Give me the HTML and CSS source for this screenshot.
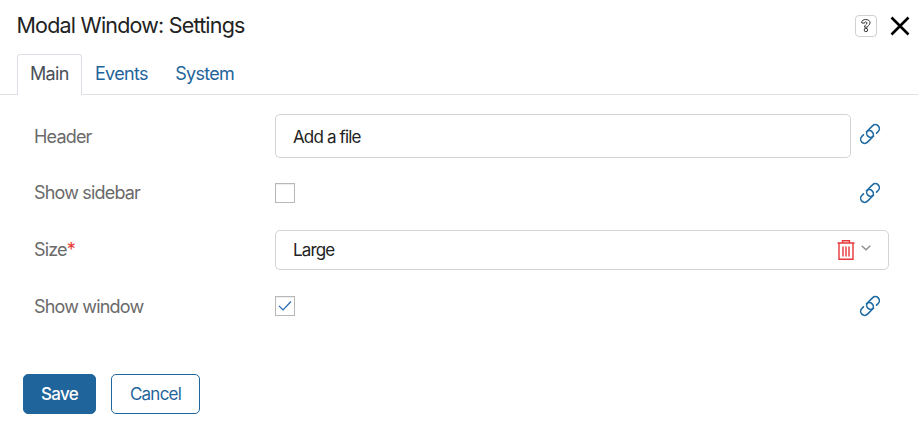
FILE: index.html
```html
<!DOCTYPE html>
<html lang="en">
<head>
<meta charset="utf-8">
<title>Modal Window: Settings</title>
<link rel="stylesheet" href="styles.css">
</head>
<body>
<svg class="sprite" aria-hidden="true">
  <symbol id="link" viewBox="0 0 22 22">
    <g fill="none" stroke="currentColor" stroke-width="1.6" stroke-linecap="round">
      <path transform="translate(14 8) rotate(-45)" d="M1 4H3.300A4 4 0 0 0 3.300 -4H-3.300A4 4 0 0 0 -3.300 4"/>
      <path transform="translate(8 14) rotate(135)" d="M1 4H3.300A4 4 0 0 0 3.300 -4H-3.300A4 4 0 0 0 -3.300 4"/>
    </g>
  </symbol>
</svg>
<main class="modal">
  <header class="head">
    <h1 class="title">Modal Window: Settings</h1>
    <button class="help" aria-label="Help"><svg width="12" height="16" viewBox="0 0 12 16"><path d="M1.700 4.900C1.700 2.400 3.500 1.500 5.700 1.500C8.300 1.500 10 2.700 10 4.800C10 7.300 7.400 7.500 7.400 9.200H4.500C4.500 6.800 6.900 6.700 6.900 5C6.900 3.400 4.400 3.500 4.400 5.200Z"/><circle cx="5.900" cy="12" r="1.700"/></svg></button>
    <button class="close" aria-label="Close"><svg width="20" height="20" viewBox="0 0 20 20"><path d="M1.500 1.500L18.500 18.500M18.500 1.500L1.500 18.500"/></svg></button>
  </header>
  <nav class="tabs">
    <a class="tab active">Main</a>
    <a class="tab">Events</a>
    <a class="tab">System</a>
  </nav>
  <form class="form">
    <div class="row tall">
      <span class="label">Header</span>
      <div class="field input">Add a file</div>
      <svg class="link"><use href="#link"/></svg>
    </div>
    <div class="row mid">
      <span class="label">Show sidebar</span>
      <span class="check"></span>
      <svg class="link"><use href="#link"/></svg>
    </div>
    <div class="row size">
      <span class="label">Size<span class="req">*</span></span>
      <div class="field select"><span class="value">Large</span>
        <svg class="trash" width="20" height="22" viewBox="0 0 20 22"><path d="M1.500 4H18.500M6.500 3.500V1.800H13.500V3.500M3 4.500V20.200H17V4.500M7 7.500V17.500M10 7.500V17.500M13 7.500V17.500"/></svg>
        <svg class="chevron" width="12" height="8" viewBox="0 0 12 8"><path d="M1.700 1.700L6 5.700L10.300 1.700"/></svg>
      </div>
    </div>
    <div class="row last">
      <span class="label">Show window</span>
      <span class="check"><svg width="14" height="12" viewBox="0 0 14 12"><path d="M1 5.800L5 9.800L13 1.500"/></svg></span>
      <svg class="link"><use href="#link"/></svg>
    </div>
  </form>
  <footer class="actions">
    <button class="btn save">Save</button>
    <button class="btn cancel">Cancel</button>
  </footer>
</main>
</body>
</html>
```
FILE: styles.css
```css
* { box-sizing: border-box; }
body { margin: 0; background: #fff; font-family: Inter, "Liberation Sans", sans-serif; color: #222; }
button { font: inherit; padding: 0; background: none; border: 0; }
svg { display: block; fill: none; }
.sprite { width: 0; height: 0; position: absolute; }
.modal { height: 432px; overflow: hidden; }
.head { height: 54px; padding: 0 8px 2px 16.500px; display: flex; align-items: center; }
.title { margin: 0; flex: 1; padding-bottom: 2px; font-size: 21.500px; font-weight: 400; letter-spacing: -0.800px; line-height: 28px; white-space: nowrap; }
.help { width: 22px; height: 22px; border: 1px solid #d0d0d0; border-radius: 4px; display: grid; place-items: center; margin-right: 13px; }
.help path, .help circle { stroke: #333; stroke-width: 1; }
.close path { stroke: #000; stroke-width: 2.600; }
.tabs { height: 41px; padding-left: 17px; display: flex; border-bottom: 1px solid #dee0e5; }
.tab { height: 41px; padding: 0 13px 2px; border: 1px solid transparent; border-bottom: 0; display: flex; align-items: center; font-size: 18px; letter-spacing: -0.700px; color: #1f659b; line-height: 24px; }
.tab.active { width: 65px; background: #fff; border-color: #dedfe6; border-radius: 3px 3px 0 0; color: #4a4f57; padding: 0 12px 2px; }
.tab:nth-child(2) { margin-left: -1px; }
.tab:nth-child(3) { margin-left: -0.500px; }
.form { padding: 17px 29px 0 34px; }
.row { display: grid; grid-template-columns: 241px 576px 30px; align-items: center; }
.row .link { width: 22px; height: 22px; color: #1f6ba3; margin-left: 8px; }
.tall { height: 48px; }
.tall .link { margin-bottom: 4px; }
.tall .label, .last .label { padding-top: 2px; }
.mid { height: 66px; }
.size { height: 48px; }
.last { height: 64px; }
.label { font-size: 18px; letter-spacing: -0.820px; color: #6a6a6a; line-height: 24px; }
.req { color: #e53935; }
.field { border: 1px solid #d4d4d4; border-radius: 5px; font-size: 17px; letter-spacing: -0.860px; padding: 0 17px; display: flex; align-items: center; color: #222; }
.input { height: 44px; padding-top: 2px; }
.select { height: 40px; width: 614px; padding-right: 16px; }
.value { flex: 1; }
.trash { margin-right: 4px; stroke: #e5383b; stroke-width: 1.400; }
.chevron { stroke: #8d8d8d; stroke-width: 1.400; margin-bottom: 5px; }
.check { width: 20px; height: 20px; border: 1px solid #b8b8b8; display: grid; place-items: center; box-shadow: inset 0 1px 1px #eee; }
.check path { stroke: #1f67b0; stroke-width: 1.200; }
.actions { display: flex; gap: 15px; padding: 36px 0 0 23px; }
.btn { height: 40px; border: 1px solid #1f659b; border-radius: 5px; font-size: 17px; letter-spacing: -0.750px; }
.save { width: 73px; background: #1f659b; color: #fff; font-weight: 500; }
.cancel { width: 89px; color: #1f659b; }
```
